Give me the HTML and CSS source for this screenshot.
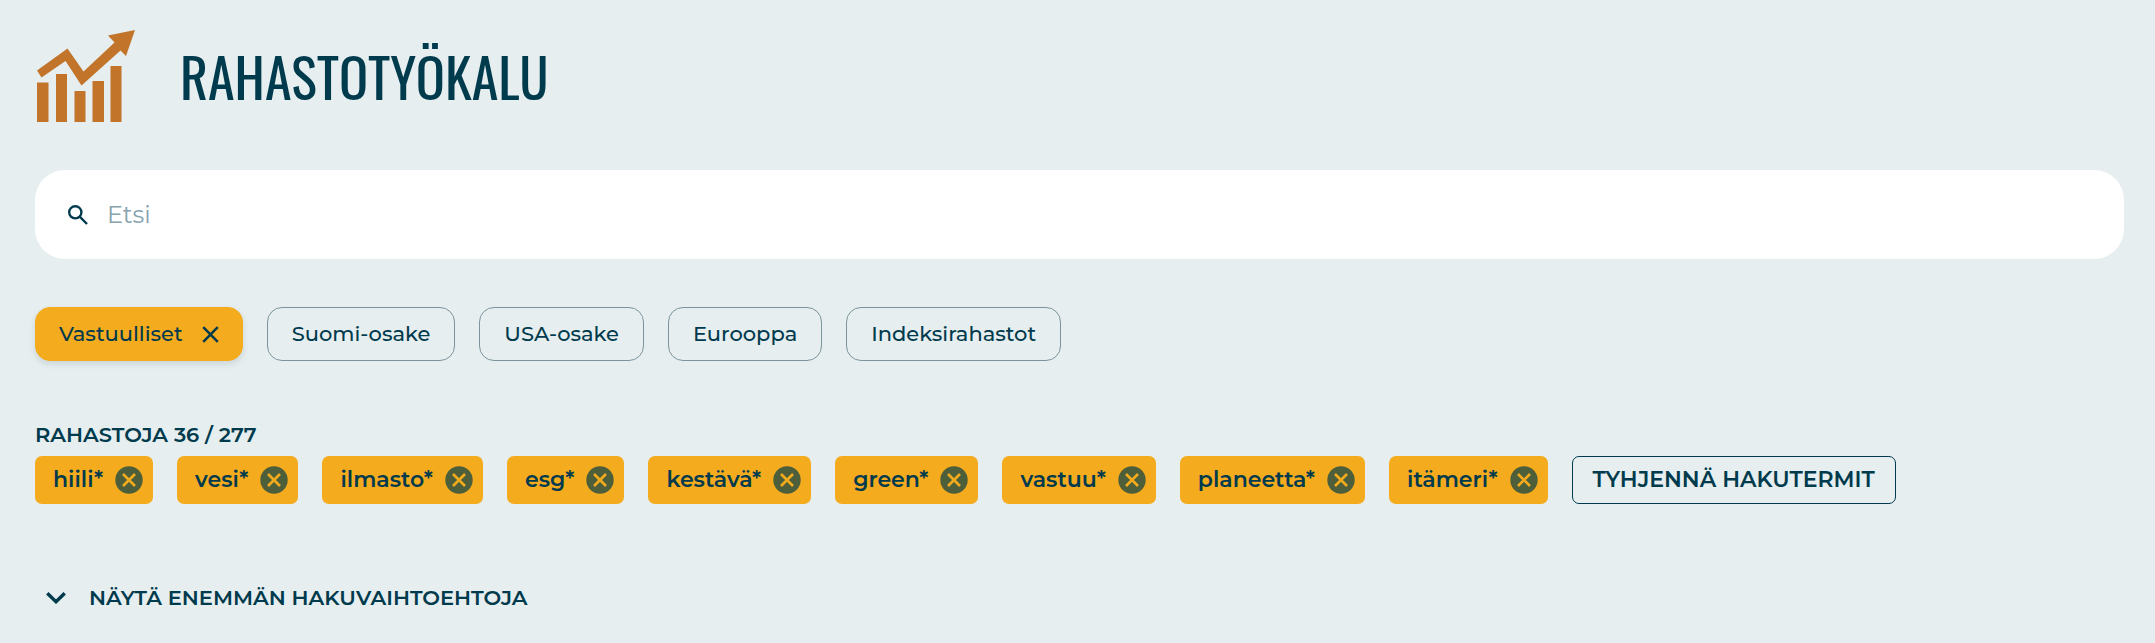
FILE: index.html
```html
<!DOCTYPE html>
<html lang="fi">
<head>
<meta charset="utf-8">
<title>Rahastotyökalu</title>
<meta name="viewport" content="width=device-width, initial-scale=1">
<link rel="stylesheet" href="styles.css">
</head>
<body>
<svg class="sprite" aria-hidden="true">
  <symbol id="remove" viewBox="0 0 28 28">
    <circle cx="14" cy="14" r="13.700" fill="#4d5f3a"/>
    <path d="M8 8l12 12M20 8L8 20" stroke="#f5ab1e" stroke-width="2.6" fill="none"/>
  </symbol>
</svg>
<main class="page">
  <header class="header">
    <svg class="logo" viewBox="0 0 98 92" aria-hidden="true">
      <path d="M0 37.500h11.500V77H0zM19 29h11v48H19zM37.500 46h11v31h-11zM55.500 36h11.500v41H55.500zM73.500 21h11v56h-11z" transform="translate(0 15)"/>
      <path d="M0 25.500L30.500 3.500L46.500 26.500L77.500-2.500L71-9.500L98-15L89 11L83.500 5.500L44.500 40.500L28.500 16L4.500 32.500z" transform="translate(0 15)"/>
    </svg>
    <h1 class="title">RAHASTOTYÖKALU</h1>
  </header>

  <form class="search" role="search">
    <svg class="search-icon" viewBox="0 0 20 20" aria-hidden="true"><circle cx="7.300" cy="7.300" r="6.100"/><path d="M11.700 11.700L19 19"/></svg>
    <input class="search-input" type="search" placeholder="Etsi" aria-label="Etsi">
  </form>

  <div class="filters">
    <button class="filter filter-active" type="button" aria-pressed="true">Vastuulliset
      <svg class="close" viewBox="0 0 18 18" aria-hidden="true"><path d="M1.300 1.300l15.400 15.400M16.700 1.300L1.300 16.700"/></svg>
    </button>
    <button class="filter" type="button">Suomi-osake</button>
    <button class="filter" type="button">USA-osake</button>
    <button class="filter" type="button">Eurooppa</button>
    <button class="filter" type="button">Indeksirahastot</button>
  </div>

  <h2 class="count">RAHASTOJA 36 / 277</h2>
  <div class="tags">
    <button class="tag" type="button">hiili*<svg class="remove"><use href="#remove"/></svg></button>
    <button class="tag" type="button">vesi*<svg class="remove"><use href="#remove"/></svg></button>
    <button class="tag" type="button">ilmasto*<svg class="remove"><use href="#remove"/></svg></button>
    <button class="tag" type="button">esg*<svg class="remove"><use href="#remove"/></svg></button>
    <button class="tag" type="button">kestävä*<svg class="remove"><use href="#remove"/></svg></button>
    <button class="tag" type="button">green*<svg class="remove"><use href="#remove"/></svg></button>
    <button class="tag" type="button">vastuu*<svg class="remove"><use href="#remove"/></svg></button>
    <button class="tag" type="button">planeetta*<svg class="remove"><use href="#remove"/></svg></button>
    <button class="tag" type="button">itämeri*<svg class="remove"><use href="#remove"/></svg></button>
    <button class="clear" type="button">TYHJENNÄ HAKUTERMIT</button>
  </div>

  <button class="more" type="button" aria-expanded="false">
    <svg class="chevron" viewBox="0 0 20 12" aria-hidden="true"><path d="M1.300 1.300L10 9.700L18.700 1.300"/></svg>
    NÄYTÄ ENEMMÄN HAKUVAIHTOEHTOJA
  </button>
</main>
</body>
</html>
```
FILE: styles.css
```css
* {
  box-sizing: border-box;
}

body {
  margin: 0;
  background: #e6eeef;
  color: #003a4d;
  font-family: Montserrat, Inter, sans-serif;
  font-size: 21px;
  font-weight: 500;
  line-height: 28px;
}

button,
input {
  font: inherit;
  color: inherit;
}

button {
  cursor: pointer;
}

.sprite {
  display: none;
}

.page {
  padding: 30px 31px 24px 35px;
}

.header {
  display: flex;
  align-items: center;
  gap: 45px;
  padding-left: 2px;
}

.logo {
  width: 98px;
  height: 92px;
  fill: #c2752a;
}

.title {
  margin: 0;
  font-family: Oswald, "Roboto Condensed", sans-serif;
  font-size: 54px;
  line-height: 80px;
  font-weight: 400;
}

.search {
  display: flex;
  align-items: center;
  gap: 19px;
  height: 89px;
  margin-top: 48px;
  padding: 0 33px;
  border-radius: 30px;
  background: #fff;
}

.search-icon {
  width: 20px;
  height: 20px;
  fill: none;
  stroke: #003a4d;
  stroke-width: 2.4;
}

.search-input {
  flex: 1;
  padding: 0;
  border: 0;
  outline: 0;
  background: none;
  font-size: 24px;
  font-weight: 400;
  line-height: 32px;
}

.search-input::placeholder {
  color: #86a3ae;
  opacity: 1;
}

.filters {
  display: flex;
  flex-wrap: wrap;
  gap: 24px;
  margin-top: 48px;
}

.filter {
  display: flex;
  align-items: center;
  gap: 19px;
  height: 54px;
  padding: 0 24px;
  border: 1px solid #7c949b;
  border-radius: 15px;
  background: none;
}

.filter-active {
  padding: 0 23px;
  border-color: #f5ab1e;
  background: #f5ab1e;
  box-shadow: 0 3px 6px rgb(0 40 50 / 12%);
}

.close {
  width: 17px;
  height: 17px;
  fill: none;
  stroke: #003a4d;
  stroke-width: 2.6;
}

.count {
  margin: 60px 0 7px;
  font-size: 21px;
  font-weight: 600;
}

.tags {
  display: flex;
  flex-wrap: wrap;
  gap: 24px;
}

.tag,
.clear {
  display: flex;
  align-items: center;
  height: 48px;
  border-radius: 7px;
  font-size: 22px;
  font-weight: 600;
}

.tag {
  gap: 12px;
  padding: 0 10px 0 18px;
  border: 0;
  background: #f5ab1e;
}

.remove {
  width: 28px;
  height: 28px;
}

.clear {
  padding: 0 20px;
  border: 1px solid #003a4d;
  background: none;
}

.more {
  display: flex;
  align-items: center;
  gap: 23px;
  margin-top: 80px;
  padding: 0 11px;
  border: 0;
  background: none;
  font-size: 21px;
  font-weight: 600;
}

.chevron {
  width: 20px;
  height: 12px;
  fill: none;
  stroke: #003a4d;
  stroke-width: 3.4;
}
```
